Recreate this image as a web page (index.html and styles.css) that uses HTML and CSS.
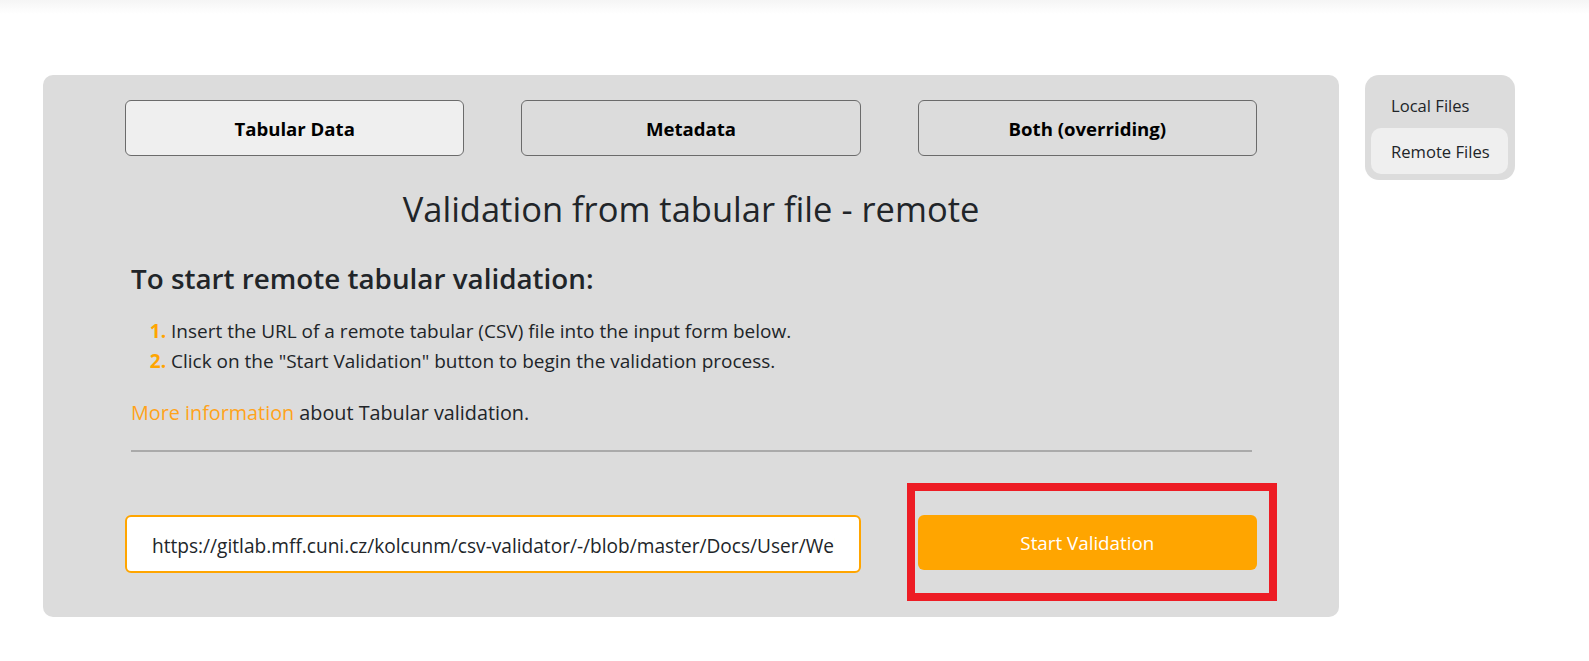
FILE: index.html
```html
<!DOCTYPE html>
<html lang="en">
<head>
<meta charset="utf-8">
<title>Validation from tabular file - remote</title>
<link rel="stylesheet" href="styles.css">
</head>
<body>
<div class="topshade"></div>
<div class="layout">
  <main class="panel">
    <div class="tabs">
      <button class="tab active">Tabular Data</button>
      <button class="tab">Metadata</button>
      <button class="tab">Both (overriding)</button>
    </div>
    <h2 class="title">Validation from tabular file - remote</h2>
    <section class="intro">
      <h3 class="subtitle">To start remote tabular validation:</h3>
      <ol class="steps">
        <li>Insert the URL of a remote tabular (CSV) file into the input form below.</li>
        <li>Click on the "Start Validation" button to begin the validation process.</li>
      </ol>
      <p class="more"><a href="#">More information</a> about Tabular validation.</p>
      <hr class="divider">
    </section>
    <div class="form-row">
      <input class="url" type="text" value="https://gitlab.mff.cuni.cz/kolcunm/csv-validator/-/blob/master/Docs/User/WebValidation.csv">
      <div class="submit-cell">
        <button class="start">Start Validation</button>
        <div class="mark"></div>
      </div>
    </div>
  </main>
  <nav class="side">
    <a class="side-item" href="#">Local Files</a>
    <a class="side-item active" href="#">Remote Files</a>
  </nav>
</div>
</body>
</html>
```
FILE: styles.css
```css
body {
  margin: 0;
  background: #fff;
  font-family: "Open Sans", Lato, sans-serif;
  color: #212529;
}

.topshade {
  height: 14px;
  background: linear-gradient(#f5f5f5, #fff);
}

.layout {
  display: flex;
  align-items: flex-start;
  gap: 26px;
  padding: 61px 0 0 43px;
}

.panel {
  width: 1296px;
  box-sizing: border-box;
  background: #dcdcdc;
  border-radius: 10px;
  padding: 25px 82px 44px;
}

.tabs {
  display: grid;
  grid-template-columns: repeat(3, 1fr);
  gap: 57px;
}

.tab {
  height: 56px;
  border: 1px solid #6b6b6b;
  border-radius: 6px;
  background: #dcdcdc;
  font-family: "Open Sans", Lato, sans-serif;
  font-weight: 700;
  font-size: 18.6px;
  color: #000;
}

.tab.active {
  background: #efefef;
}

.title {
  margin: 33px 0 0;
  text-align: center;
  font-size: 34.5px;
  font-weight: 400;
  line-height: 40px;
}

.intro {
  padding: 0 5px 0 6px;
}

.subtitle {
  margin: 33px 0 0;
  font-size: 27.8px;
  font-weight: 600;
  line-height: 32px;
}

.steps {
  margin: 22px 0 0;
  padding-left: 40px;
  font-size: 19px;
  line-height: 30px;
}

.steps li::marker {
  color: #ffa500;
  font-weight: 700;
}

.more {
  margin: 22px 0 0;
  font-size: 19.8px;
  line-height: 30px;
}

.more a {
  color: #ffa31a;
  text-decoration: none;
}

.divider {
  margin: 22px 0 0;
  border: 0;
  height: 2px;
  background: #aaa;
}

.form-row {
  display: grid;
  grid-template-columns: repeat(3, 1fr);
  gap: 57px;
  margin-top: 63px;
  align-items: start;
}

.url {
  grid-column: span 2;
  height: 58px;
  box-sizing: border-box;
  border: 2px solid #ffa500;
  border-radius: 6px;
  padding: 3px 24px 0 25px;
  font-family: "Open Sans", Lato, sans-serif;
  font-size: 19.1px;
  color: #212529;
  background: #fff;
  outline: none;
}

.submit-cell {
  position: relative;
}

.start {
  display: block;
  width: 100%;
  height: 55px;
  border: 0;
  border-radius: 6px;
  background: #ffa500;
  color: #fff;
  font-family: "Open Sans", Lato, sans-serif;
  font-size: 18.8px;
}

.mark {
  position: absolute;
  left: -11px;
  top: -32px;
  right: -20px;
  bottom: -31px;
  border: 8px solid #ed1c24;
  pointer-events: none;
}

.side {
  width: 150px;
  box-sizing: border-box;
  background: #dcdcdc;
  border-radius: 14px;
  padding: 7px 7px 6px 6px;
  display: flex;
  flex-direction: column;
}

.side-item {
  height: 46px;
  display: flex;
  align-items: center;
  padding-left: 20px;
  border-radius: 10px;
  font-size: 16.6px;
  color: #212529;
  text-decoration: none;
}

.side-item.active {
  background: #efefef;
}
```
